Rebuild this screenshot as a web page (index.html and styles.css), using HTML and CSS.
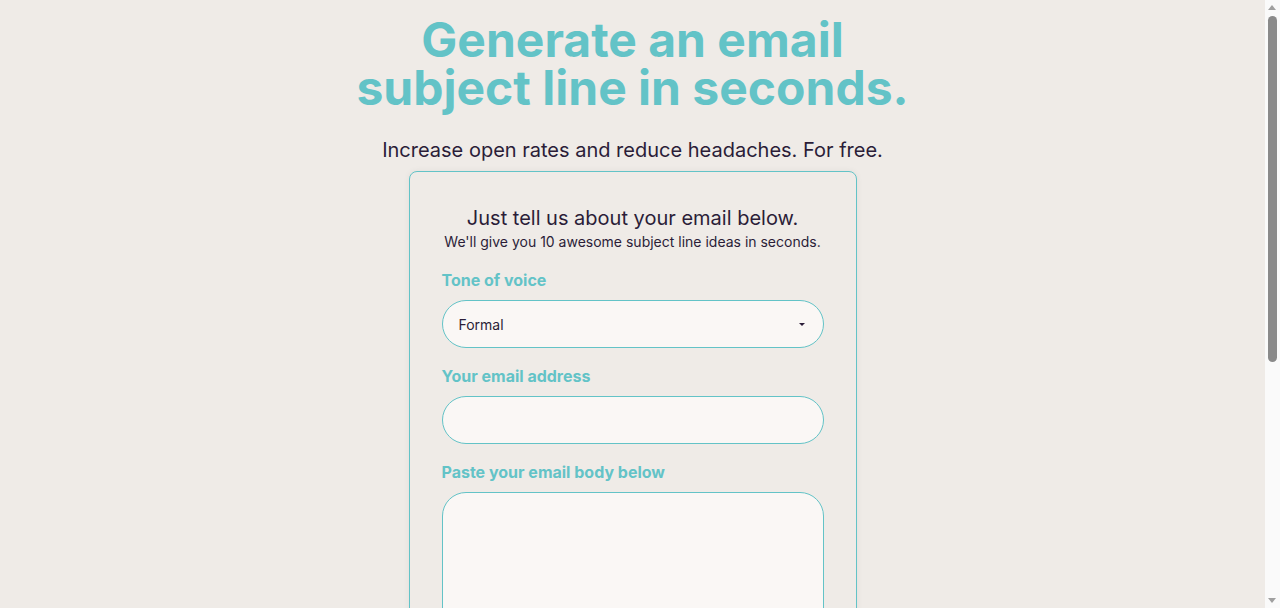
FILE: index.html
```html
<!DOCTYPE html>
<html lang="en">
<head>
<meta charset="utf-8">
<title>Email subject line generator</title>
<link rel="stylesheet" href="styles.css">
</head>
<body>
<main class="page">
  <h1 class="hero-title">Generate an email<br>subject line in seconds.</h1>
  <p class="hero-sub">Increase open rates and reduce headaches. For free.</p>
  <form class="card">
    <h2 class="card-title">Just tell us about your email below.</h2>
    <p class="card-sub">We'll give you 10 awesome subject line ideas in seconds.</p>
    <div class="field">
      <label class="label" for="tone">Tone of voice</label>
      <div class="select-wrap">
        <select id="tone" class="control select">
          <option>Formal</option>
          <option>Casual</option>
          <option>Friendly</option>
        </select>
        <span class="caret"></span>
      </div>
    </div>
    <div class="field">
      <label class="label" for="email">Your email address</label>
      <input id="email" class="control" type="email">
    </div>
    <div class="field">
      <label class="label" for="body">Paste your email body below</label>
      <textarea id="body" class="control area"></textarea>
    </div>
    <button type="button" class="submit">Generate subject lines</button>
  </form>
</main>
<div class="scrollbar" aria-hidden="true">
  <span class="sb-up"></span>
  <span class="sb-thumb"></span>
  <span class="sb-down"></span>
</div>
</body>
</html>
```

FILE: styles.css
```css
html, body {
  margin: 0;
  padding: 0;
  background: #efebe7;
}
body {
  font-family: Inter, "Noto Sans", "Liberation Sans", sans-serif;
  color: #2b1d38;
}
.page {
  display: flex;
  flex-direction: column;
  align-items: center;
  padding: 16px 31px 96px 16px;
}
.hero-title {
  margin: 0;
  font-size: 48px;
  line-height: 48px;
  font-weight: 700;
  color: #63c3c7;
  text-align: center;
}
.hero-sub {
  margin: 24px 0 7px;
  font-size: 20px;
  line-height: 28px;
  text-align: center;
}
.card {
  box-sizing: border-box;
  width: 448px;
  padding: 32px 32px 32px;
  border: 1px solid #63c3c7;
  border-radius: 8px;
  background: #efebe7;
  box-shadow: 0 0 6px rgba(0, 0, 0, 0.06);
  display: flex;
  flex-direction: column;
}
.card-title {
  margin: 0;
  font-size: 20px;
  line-height: 28px;
  font-weight: 400;
  text-align: center;
}
.card-sub {
  margin: 0 0 16px;
  font-size: 14px;
  line-height: 20px;
  text-align: center;
}
.field {
  display: flex;
  flex-direction: column;
  gap: 8px;
  margin-bottom: 16px;
}
.label {
  font-size: 16px;
  line-height: 24px;
  font-weight: 700;
  color: #63c3c7;
}
.control {
  box-sizing: border-box;
  width: 100%;
  height: 48px;
  border: 1px solid #63c3c7;
  border-radius: 24px;
  background: #faf7f5;
  font-family: inherit;
  font-size: 14px;
  color: #2b1d38;
  padding: 0 16px;
  outline: none;
}
.select-wrap {
  position: relative;
}
.select {
  appearance: none;
  -webkit-appearance: none;
}
.caret {
  position: absolute;
  right: 19px;
  top: 23px;
  width: 0;
  height: 0;
  border-left: 3px solid transparent;
  border-right: 3px solid transparent;
  border-top: 3px solid #2b1d38;
  pointer-events: none;
}
.area {
  height: 320px;
  padding: 14px 16px;
  resize: none;
}
.submit {
  margin-top: 8px;
  height: 48px;
  border: none;
  border-radius: 24px;
  background: #63c3c7;
  color: #ffffff;
  font-family: inherit;
  font-size: 16px;
  font-weight: 700;
}

/* classic scrollbar drawn over the right edge */
.scrollbar {
  position: fixed;
  top: 0;
  right: 0;
  width: 15px;
  height: 100vh;
  background: #fafafa;
}
.sb-up, .sb-down {
  position: absolute;
  left: 3px;
  width: 0;
  height: 0;
  border-left: 4.5px solid transparent;
  border-right: 4.5px solid transparent;
}
.sb-up {
  top: 5px;
  border-bottom: 5px solid #a0a0a0;
}
.sb-down {
  bottom: 5px;
  border-top: 5px solid #a0a0a0;
}
.sb-thumb {
  position: absolute;
  top: 16px;
  left: 3px;
  width: 9px;
  height: 346px;
  border-radius: 5px;
  background: #8a8a8a;
}
```
